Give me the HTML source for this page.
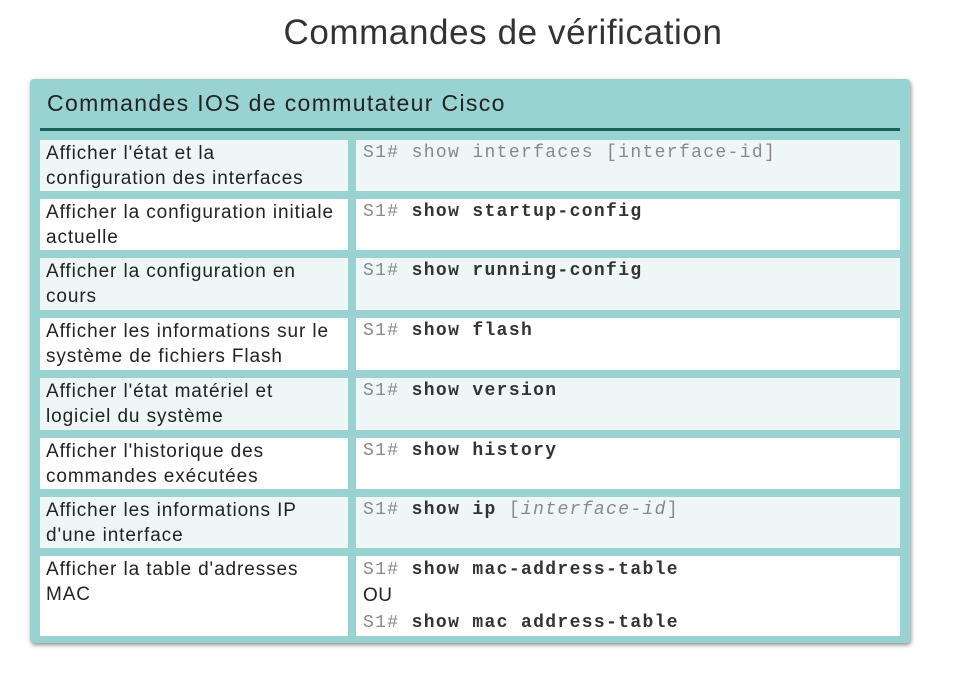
<!DOCTYPE html>
<html><head><meta charset="utf-8"><style>
body{margin:0;width:967px;height:683px;background:#fff;position:relative;font-family:"Liberation Sans",sans-serif;overflow:hidden}
h1{position:absolute;left:0;width:1006px;top:13px;margin:0;text-align:center;font-size:35px;font-weight:normal;color:#333;letter-spacing:0.6px}
.card{position:absolute;left:30px;top:79px;width:880px;height:564px;background:#99d3d1;border-radius:4px;box-shadow:1px 2px 4px rgba(0,0,0,.45)}
.hd{position:absolute;left:47px;top:90px;font-size:23px;color:#222;letter-spacing:1.35px;white-space:nowrap}
.line{position:absolute;left:40px;top:128px;width:860px;height:3px;background:#17625d}
.c{position:absolute;box-sizing:border-box;padding:1px 6px 0;font-size:19px;line-height:25px;color:#222;letter-spacing:0.9px;white-space:nowrap;overflow:hidden}
.l{left:40px;width:308px}.r{left:356px;width:544px;font-family:"Liberation Mono",monospace;font-size:18px;letter-spacing:1.35px;color:#888;padding-left:7px}
.r b{color:#333}.a{background:#eef7f6}.w{background:#fff}
.ou{font-family:"Liberation Sans",sans-serif;color:#222;font-size:19px;letter-spacing:0.5px}
</style></head><body>
<h1>Commandes de vérification</h1>
<div class="card"></div>
<div class="hd">Commandes IOS de commutateur Cisco</div>
<div class="line"></div>
<div class="c l a" style="top:140px;height:51px">Afficher l'état et la<br>configuration des interfaces</div>
<div class="c r a" style="top:140px;height:51px">S1# show interfaces [interface-id]</div>
<div class="c l w" style="top:199px;height:51px">Afficher la configuration initiale<br>actuelle</div>
<div class="c r w" style="top:199px;height:51px">S1# <b>show startup-config</b></div>
<div class="c l a" style="top:258px;height:52px">Afficher la configuration en<br>cours</div>
<div class="c r a" style="top:258px;height:52px">S1# <b>show running-config</b></div>
<div class="c l w" style="top:318px;height:52px">Afficher les informations sur le<br>système de fichiers Flash</div>
<div class="c r w" style="top:318px;height:52px">S1# <b>show flash</b></div>
<div class="c l a" style="top:378px;height:52px">Afficher l'état matériel et<br>logiciel du système</div>
<div class="c r a" style="top:378px;height:52px">S1# <b>show version</b></div>
<div class="c l w" style="top:438px;height:51px">Afficher l'historique des<br>commandes exécutées</div>
<div class="c r w" style="top:438px;height:51px">S1# <b>show history</b></div>
<div class="c l a" style="top:497px;height:51px">Afficher les informations IP<br>d'une interface</div>
<div class="c r a" style="top:497px;height:51px">S1# <b>show ip</b> [<i>interface-id</i>]</div>
<div class="c l w" style="top:556px;height:80px">Afficher la table d'adresses<br>MAC</div>
<div class="c r w" style="top:556px;height:80px;line-height:26px">S1# <b>show mac-address-table</b><br><span class="ou">OU</span><br>S1# <b>show mac address-table</b></div>
</body></html>
